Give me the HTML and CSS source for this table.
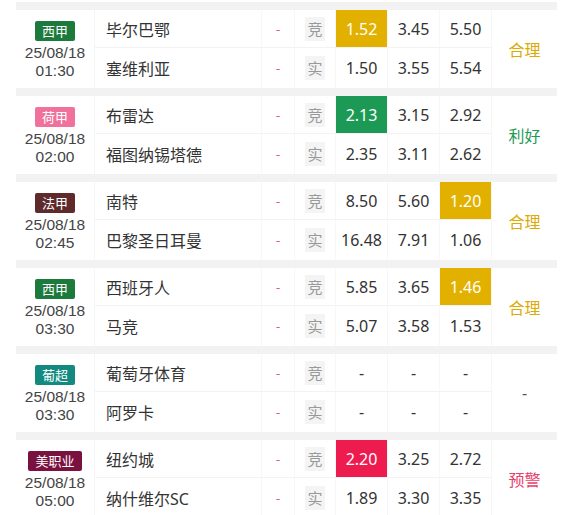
FILE: index.html
```html
<!DOCTYPE html>
<html lang="zh">
<head>
<meta charset="utf-8">
<link rel="stylesheet" href="styles.css">
</head>
<body>
<div class="list">
  <div class="match">
    <div class="info"><span class="badge b-xj">西甲</span><span class="dt">25/08/18<br>01:30</span></div>
    <div class="team r1">毕尔巴鄂</div><div class="dash r1">-</div><div class="type r1"><span>竞</span></div>
    <div class="odd r1 hl-y">1.52</div><div class="odd r1">3.45</div><div class="odd r1">5.50</div>
    <div class="verdict v-ok">合理</div>
    <div class="team">塞维利亚</div><div class="dash">-</div><div class="type"><span>实</span></div>
    <div class="odd">1.50</div><div class="odd">3.55</div><div class="odd">5.54</div>
  </div>
  <div class="match">
    <div class="info"><span class="badge b-hj">荷甲</span><span class="dt">25/08/18<br>02:00</span></div>
    <div class="team r1">布雷达</div><div class="dash r1">-</div><div class="type r1"><span>竞</span></div>
    <div class="odd r1 hl-g">2.13</div><div class="odd r1">3.15</div><div class="odd r1">2.92</div>
    <div class="verdict v-good">利好</div>
    <div class="team">福图纳锡塔德</div><div class="dash">-</div><div class="type"><span>实</span></div>
    <div class="odd">2.35</div><div class="odd">3.11</div><div class="odd">2.62</div>
  </div>
  <div class="match">
    <div class="info"><span class="badge b-fj">法甲</span><span class="dt">25/08/18<br>02:45</span></div>
    <div class="team r1">南特</div><div class="dash r1">-</div><div class="type r1"><span>竞</span></div>
    <div class="odd r1">8.50</div><div class="odd r1">5.60</div><div class="odd r1 hl-y">1.20</div>
    <div class="verdict v-ok">合理</div>
    <div class="team">巴黎圣日耳曼</div><div class="dash">-</div><div class="type"><span>实</span></div>
    <div class="odd">16.48</div><div class="odd">7.91</div><div class="odd">1.06</div>
  </div>
  <div class="match">
    <div class="info"><span class="badge b-xj">西甲</span><span class="dt">25/08/18<br>03:30</span></div>
    <div class="team r1">西班牙人</div><div class="dash r1">-</div><div class="type r1"><span>竞</span></div>
    <div class="odd r1">5.85</div><div class="odd r1">3.65</div><div class="odd r1 hl-y">1.46</div>
    <div class="verdict v-ok">合理</div>
    <div class="team">马竞</div><div class="dash">-</div><div class="type"><span>实</span></div>
    <div class="odd">5.07</div><div class="odd">3.58</div><div class="odd">1.53</div>
  </div>
  <div class="match">
    <div class="info"><span class="badge b-pc">葡超</span><span class="dt">25/08/18<br>03:30</span></div>
    <div class="team r1">葡萄牙体育</div><div class="dash r1">-</div><div class="type r1"><span>竞</span></div>
    <div class="odd r1">-</div><div class="odd r1">-</div><div class="odd r1">-</div>
    <div class="verdict v-none">-</div>
    <div class="team">阿罗卡</div><div class="dash">-</div><div class="type"><span>实</span></div>
    <div class="odd">-</div><div class="odd">-</div><div class="odd">-</div>
  </div>
  <div class="match">
    <div class="info"><span class="badge b-mls">美职业</span><span class="dt">25/08/18<br>05:00</span></div>
    <div class="team r1">纽约城</div><div class="dash r1">-</div><div class="type r1"><span>竞</span></div>
    <div class="odd r1 hl-r">2.20</div><div class="odd r1">3.25</div><div class="odd r1">2.72</div>
    <div class="verdict v-warn">预警</div>
    <div class="team">纳什维尔SC</div><div class="dash">-</div><div class="type"><span>实</span></div>
    <div class="odd">1.89</div><div class="odd">3.30</div><div class="odd">3.35</div>
  </div>
</div>
</body>
</html>
```

FILE: styles.css
```css
* { box-sizing: border-box; }
html, body { margin: 0; padding: 0; background: #fff; }
body {
  font-family: "Noto Sans", "Noto Sans CJK SC", sans-serif;
  color: #333;
  overflow: hidden;
}
.list {
  margin: 2px 19px 0 16px;
  padding-top: 8px;
  background: #f2f2f2;
  display: flex;
  flex-direction: column;
  gap: 8px;
}
.match {
  background: #fff;
  display: grid;
  grid-template-columns: 79px 167px 33px 41px 52px 52px 52px 65px;
  grid-template-rows: 38px 40px;
}
.info {
  grid-row: 1 / span 2;
  border-right: 1px solid #f5f5f5;
  display: flex;
  flex-direction: column;
  align-items: center;
  justify-content: center;
  padding-top: 2px;
}
.badge {
  display: block;
  color: #fff;
  font-size: 13px;
  line-height: 20px;
  height: 20px;
  padding: 0 7px;
  border-radius: 2px;
  margin-bottom: 3px;
}
.b-xj { background: #1c7a3c; }
.b-hj { background: #f0719b; }
.b-fj { background: #5e2a2c; }
.b-pc { background: #128a80; }
.b-mls { background: #7a1240; }
.dt {
  display: block;
  text-align: center;
  font-family: "Liberation Sans", "Noto Sans", sans-serif;
  font-size: 15.5px;
  line-height: 17.5px;
  color: #444;
}
.team, .dash, .type, .odd {
  display: flex;
  align-items: center;
  border-right: 1px solid #f7f7f7;
}
.r1 { border-bottom: 1px solid #f3f3f3; }
.team {
  font-size: 16px;
  padding-left: 11px;
  color: #333;
}
.dash {
  justify-content: center;
  color: #e2577a;
  font-size: 13px;
}
.type { justify-content: center; }
.type span {
  background: #f4f4f4;
  color: #999;
  font-size: 15px;
  width: 20px;
  height: 24px;
  line-height: 24px;
  text-align: center;
}
.odd {
  justify-content: center;
  font-size: 16px;
  color: #333;
}
.hl-y { background: #e2b100; color: #fff; }
.hl-g { background: #1c9a55; color: #fff; }
.hl-r { background: #ee1b4f; color: #fff; }
.verdict {
  grid-column: 8;
  grid-row: 1 / span 2;
  display: flex;
  align-items: center;
  justify-content: center;
  font-size: 16px;
}
.v-ok { color: #dcaa00; }
.v-good { color: #1f9a55; }
.v-warn { color: #e8426c; }
.v-none { color: #555; }
```
